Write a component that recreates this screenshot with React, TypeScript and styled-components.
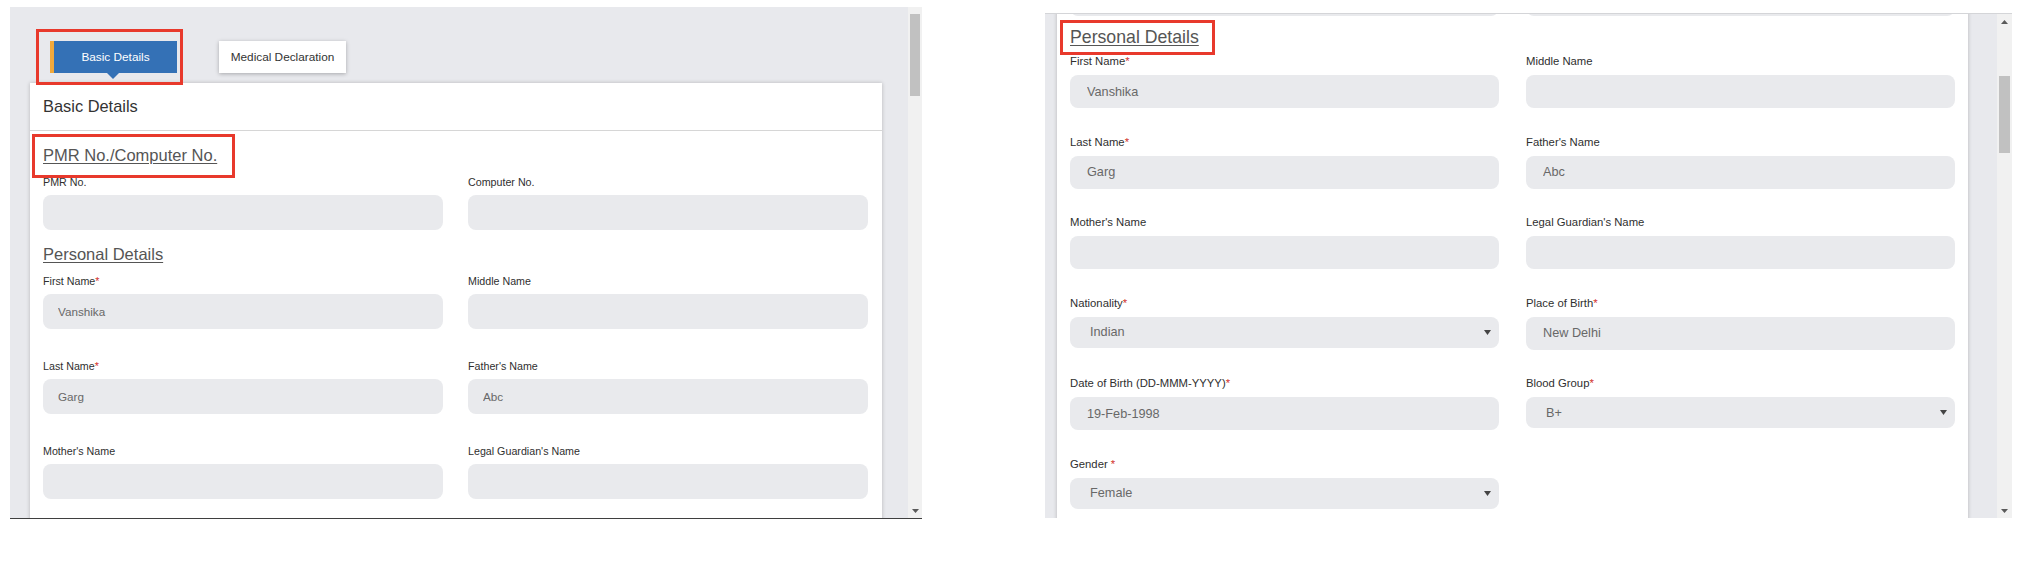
import React from "react";
import styled, { createGlobalStyle, ThemeProvider } from "styled-components";

type Metrics = {
  labelSize: number;
  labelLH: number;
  labelGap: number;
  valueSize: number;
  valueIndent: number;
  selectIndent: number;
  inputH: number;
  radius: number;
  rowGap: number;
  colGap: number;
  headingSize: number;
  headingLH: number;
  headingTop: number;
  headingBottom: number;
  padL: number;
  padR: number;
};

declare module "styled-components" {
  export interface DefaultTheme extends Metrics {}
}

const leftMetrics: Metrics = {
  labelSize: 10.7,
  labelLH: 14,
  labelGap: 6,
  valueSize: 11.7,
  valueIndent: 15,
  selectIndent: 18,
  inputH: 35,
  radius: 8,
  rowGap: 30,
  colGap: 25,
  headingSize: 16.5,
  headingLH: 20,
  headingTop: 14,
  headingBottom: 10,
  padL: 13,
  padR: 14,
};

const rightMetrics: Metrics = {
  labelSize: 11.3,
  labelLH: 13,
  labelGap: 7,
  valueSize: 12.7,
  valueIndent: 17,
  selectIndent: 20,
  inputH: 33,
  radius: 8,
  rowGap: 27.5,
  colGap: 27,
  headingSize: 17.7,
  headingLH: 21,
  headingTop: 11,
  headingBottom: 7,
  padL: 13,
  padR: 13,
};

type FieldDef = {
  label: string;
  value?: string;
  required?: boolean;
  spaced?: boolean;
  select?: boolean;
};

const pmrFields: FieldDef[] = [{ label: "PMR No." }, { label: "Computer No." }];

const personalFields: FieldDef[] = [
  { label: "First Name", required: true, value: "Vanshika" },
  { label: "Middle Name" },
  { label: "Last Name", required: true, value: "Garg" },
  { label: "Father's Name", value: "Abc" },
  { label: "Mother's Name" },
  { label: "Legal Guardian's Name" },
  { label: "Nationality", required: true, value: "Indian", select: true },
  { label: "Place of Birth", required: true, value: "New Delhi" },
  { label: "Date of Birth (DD-MMM-YYYY)", required: true, value: "19-Feb-1998" },
  { label: "Blood Group", required: true, value: "B+", select: true },
  { label: "Gender", required: true, spaced: true, value: "Female", select: true },
];

const GlobalStyle = createGlobalStyle`
  html, body {
    margin: 0;
    padding: 0;
    background: #ffffff;
    font-family: "Liberation Sans", Arial, sans-serif;
  }
  * { box-sizing: border-box; }
`;

const Page = styled.div`
  width: 2029px;
  height: 564px;
  display: flex;
  align-items: flex-start;
  gap: 123px;
  padding-left: 10px;
  overflow: hidden;
`;

const Viewport = styled.div<{ $top: number; $w: number; $h: number; $line?: boolean; $topLine?: boolean }>`
  flex: none;
  display: flex;
  margin-top: ${(p) => p.$top}px;
  width: ${(p) => p.$w}px;
  height: ${(p) => p.$h}px;
  background: #e8e9ed;
  border-bottom: ${(p) => (p.$line ? "1px solid #3f3f3f" : "none")};
  border-top: ${(p) => (p.$topLine ? "1px solid #d4d5d8" : "none")};
`;

const ScrollArea = styled.div<{ $pad: string }>`
  flex: 1;
  min-width: 0;
  overflow: hidden;
  padding: ${(p) => p.$pad};
`;

const Scrollbar = styled.div<{ $w: number }>`
  flex: none;
  width: ${(p) => p.$w}px;
  background: #f1f1f1;
  display: flex;
  flex-direction: column;
`;

const ScrollTrack = styled.div`
  flex: 1;
  display: flex;
  flex-direction: column;
  align-items: center;
`;

const ScrollThumb = styled.div<{ $top: number; $h: number }>`
  margin-top: ${(p) => p.$top}px;
  height: ${(p) => p.$h}px;
  width: calc(100% - 4px);
  background: #c1c1c1;
`;

const ScrollArrow = styled.div`
  flex: none;
  height: 15px;
  display: flex;
  align-items: center;
  justify-content: center;
`;

const TabRow = styled.div`
  display: flex;
  gap: 42px;
  margin-left: 20px;
  margin-bottom: 10px;
`;

const Tab = styled.div<{ $active?: boolean }>`
  position: relative;
  width: 127px;
  height: 32px;
  display: flex;
  align-items: center;
  justify-content: center;
  font-size: 11.8px;
  color: ${(p) => (p.$active ? "#ffffff" : "#333333")};
  background: ${(p) => (p.$active ? "#3471b6" : "#ffffff")};
  border-left: ${(p) => (p.$active ? "4px solid #f2a93b" : "none")};
  box-shadow: ${(p) => (p.$active ? "none" : "0 1px 4px rgba(0, 0, 0, 0.28)")};
`;

const TabPointer = styled.span`
  position: absolute;
  left: 53px;
  top: 100%;
  width: 0;
  height: 0;
  border-left: 6px solid transparent;
  border-right: 6px solid transparent;
  border-top: 6px solid #3471b6;
`;

const Annotation = styled.span<{ $inset: string }>`
  position: absolute;
  inset: ${(p) => p.$inset};
  border: 3px solid #e8392c;
  pointer-events: none;
`;

const Card = styled.div`
  background: #ffffff;
  box-shadow: 0 0 4px rgba(0, 0, 0, 0.22);
`;

const CardHeader = styled.div`
  height: 48px;
  display: flex;
  align-items: center;
  padding: 0 13px;
  border-bottom: 1px solid #d6d6d6;
  font-size: 16.4px;
  color: #333333;
`;

const CardBody = styled.div<{ $padTop: number }>`
  padding: ${(p) => p.$padTop}px ${(p) => p.theme.padR}px 40px ${(p) => p.theme.padL}px;
`;

const HeadingLine = styled.div<{ $first?: boolean }>`
  margin-top: ${(p) => (p.$first ? 0 : p.theme.headingTop)}px;
`;

const SectionHeading = styled.h3`
  position: relative;
  display: inline-block;
  margin: 0;
  font-weight: normal;
  font-size: ${(p) => p.theme.headingSize}px;
  line-height: ${(p) => p.theme.headingLH}px;
  color: #555555;
  text-decoration: underline;
  text-decoration-thickness: 1px;
  text-underline-offset: 2px;
`;

const FieldGrid = styled.div<{ $stub?: boolean }>`
  display: grid;
  grid-template-columns: 1fr 1fr;
  column-gap: ${(p) => p.theme.colGap}px;
  row-gap: ${(p) => p.theme.rowGap}px;
  margin-top: ${(p) => (p.$stub ? -31 : p.theme.headingBottom)}px;
`;

const FieldWrap = styled.div`
  display: flex;
  flex-direction: column;
  min-width: 0;
`;

const Label = styled.label`
  font-size: ${(p) => p.theme.labelSize}px;
  line-height: ${(p) => p.theme.labelLH}px;
  margin-bottom: ${(p) => p.theme.labelGap}px;
  color: #2f2f2f;
  white-space: nowrap;
`;

const Required = styled.span`
  color: #d2322d;
`;

const TextInput = styled.input`
  display: block;
  width: 100%;
  height: ${(p) => p.theme.inputH}px;
  border: none;
  outline: none;
  border-radius: ${(p) => p.theme.radius}px;
  background: #e9eaed;
  padding: 0 10px 0 ${(p) => p.theme.valueIndent}px;
  font-family: "Liberation Sans", Arial, sans-serif;
  font-size: ${(p) => p.theme.valueSize}px;
  color: #686868;
`;

const SelectBox = styled.div`
  display: flex;
  align-items: center;
  justify-content: space-between;
  height: ${(p) => p.theme.inputH - 2}px;
  border-radius: ${(p) => p.theme.radius}px;
  background: #e9eaed;
  padding: 0 8px 0 ${(p) => p.theme.selectIndent}px;
  font-size: ${(p) => p.theme.valueSize}px;
  color: #686868;
`;

const Caret = ({ color = "#444" }: { color?: string }) => (
  <svg width="7" height="5" viewBox="0 0 7 5">
    <path d="M0 0 L7 0 L3.5 5 Z" fill={color} />
  </svg>
);

const CaretUp = () => (
  <svg width="7" height="4" viewBox="0 0 7 4">
    <path d="M0 4 L7 4 L3.5 0 Z" fill="#5a5a5a" />
  </svg>
);

const CaretDown = () => (
  <svg width="7" height="4" viewBox="0 0 7 4">
    <path d="M0 0 L7 0 L3.5 4 Z" fill="#5a5a5a" />
  </svg>
);

const Field = ({ f }: { f: FieldDef }) => (
  <FieldWrap>
    <Label>
      {f.label}
      {f.required && <Required>{f.spaced ? " *" : "*"}</Required>}
    </Label>
    {f.select ? (
      <SelectBox>
        <span>{f.value}</span>
        <Caret />
      </SelectBox>
    ) : (
      <TextInput readOnly value={f.value ?? ""} />
    )}
  </FieldWrap>
);

const Section = ({
  title,
  fields,
  first,
  annotate,
}: {
  title: string;
  fields: FieldDef[];
  first?: boolean;
  annotate?: string;
}) => (
  <>
    <HeadingLine $first={first}>
      <SectionHeading>
        {title}
        {annotate && <Annotation $inset={annotate} />}
      </SectionHeading>
    </HeadingLine>
    <FieldGrid>
      {fields.map((f) => (
        <Field key={f.label} f={f} />
      ))}
    </FieldGrid>
  </>
);

const LeftPanel = () => (
  <ThemeProvider theme={leftMetrics}>
    <Viewport $top={7} $w={912} $h={512} $line>
      <ScrollArea $pad="34px 26px 0 20px">
        <TabRow>
          <Tab $active>
            Basic Details
            <TabPointer />
            <Annotation $inset="-12px -6px -12px -18px" />
          </Tab>
          <Tab>Medical Declaration</Tab>
        </TabRow>
        <Card>
          <CardHeader>Basic Details</CardHeader>
          <CardBody $padTop={14}>
            <Section
              first
              title="PMR No./Computer No."
              fields={pmrFields}
              annotate="-11px -18px -13px -11px"
            />
            <Section title="Personal Details" fields={personalFields.slice(0, 6)} />
          </CardBody>
        </Card>
      </ScrollArea>
      <Scrollbar $w={14}>
        <ScrollTrack>
          <ScrollThumb $top={7} $h={82} />
        </ScrollTrack>
        <ScrollArrow>
          <CaretDown />
        </ScrollArrow>
      </Scrollbar>
    </Viewport>
  </ThemeProvider>
);

const RightPanel = () => (
  <ThemeProvider theme={rightMetrics}>
    <Viewport $top={13} $w={967} $h={505} $topLine>
      <ScrollArea $pad="0 29px 0 12px">
        <Card>
          <CardBody $padTop={0}>
            <FieldGrid $stub>
              <TextInput readOnly value="" aria-label="PMR No." />
              <TextInput readOnly value="" aria-label="Computer No." />
            </FieldGrid>
            <Section
              title="Personal Details"
              fields={personalFields}
              annotate="-7px -16px -7px -10px"
            />
          </CardBody>
        </Card>
      </ScrollArea>
      <Scrollbar $w={15}>
        <ScrollArrow>
          <CaretUp />
        </ScrollArrow>
        <ScrollTrack>
          <ScrollThumb $top={47} $h={77} />
        </ScrollTrack>
        <ScrollArrow>
          <CaretDown />
        </ScrollArrow>
      </Scrollbar>
    </Viewport>
  </ThemeProvider>
);

export default function App() {
  return (
    <>
      <GlobalStyle />
      <Page>
        <LeftPanel />
        <RightPanel />
      </Page>
    </>
  );
}
